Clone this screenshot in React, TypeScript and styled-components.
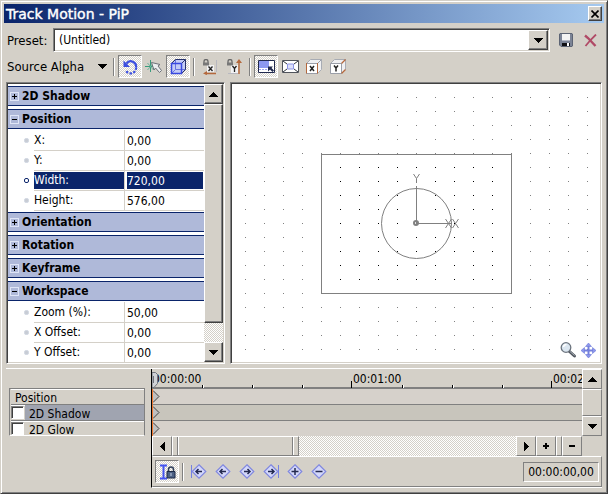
import React, { useState } from "react";
import styled, { createGlobalStyle, css } from "styled-components";

const face = "#d4d0c8";
const shade = "#808080";
const dark = "#404040";
const navy = "#0a246a";
const dither = `conic-gradient(#fff 25%, ${face} 0 50%, #fff 0 75%, ${face} 0) 0 0 / 2px 2px`;

const GlobalStyle = createGlobalStyle`
  *, *::before, *::after { box-sizing: border-box; }
  body { margin: 0; background: ${face}; }
  body, button, input, select {
    font-family: "DejaVu Sans Condensed", "DejaVu Sans", Tahoma, sans-serif;
    font-size: 12px;
    color: #000;
  }
  button, input, select { margin: 0; padding: 0; border: 0; border-radius: 0; background: none; outline: none; }
  svg { display: block; }
`;

const raised = css`
  border: 1px solid;
  border-color: #fff ${dark} ${dark} #fff;
  box-shadow: inset -1px -1px 0 ${shade};
`;

const flatRaised = css`
  border: 1px solid;
  border-color: #fff ${shade} ${shade} #fff;
`;

const sunken = css`
  border: 1px solid;
  border-color: ${shade} #fff #fff ${shade};
  box-shadow: inset 1px 1px 0 ${dark}, inset -1px -1px 0 ${face};
  padding: 1px;
`;

const Dialog = styled.main`
  display: flex;
  flex-direction: column;
  height: 100vh;
  min-height: 400px;
  padding: 2px;
  background: ${face};
  border: 1px solid;
  border-color: ${face} ${dark} ${dark} ${face};
  box-shadow: inset 1px 1px 0 #fff, inset -1px -1px 0 ${shade};
`;

const TitleBar = styled.header`
  display: flex;
  align-items: center;
  justify-content: space-between;
  flex: none;
  height: 19px;
  margin: 1px 1px 0;
  padding: 0 2px;
  background: linear-gradient(90deg, ${navy}, #a6caf0);
`;

const Title = styled.h1`
  margin: 0;
  font-family: "DejaVu Sans", Verdana, sans-serif;
  font-size: 14px;
  line-height: 18px;
  font-weight: 400;
  -webkit-text-stroke: 0.4px #fff;
  color: #fff;
`;

const CloseButton = styled.button`
  ${raised}
  display: grid;
  place-items: center;
  width: 14px;
  height: 15px;
  background: ${face};
`;

const PresetRow = styled.div`
  display: flex;
  align-items: center;
  flex: none;
  margin-top: 5px;
  padding: 0 3px 0 4px;
`;

const PresetLabel = styled.label`
  width: 46px;
  flex: none;
  font-size: 13px;
`;

const Combo = styled.div`
  ${sunken}
  display: grid;
  grid-template-columns: 1fr 20px;
  flex: 1;
  height: 24px;
  margin-right: 4px;
  background: #fff;
`;

const ComboSelect = styled.select`
  appearance: none;
  grid-area: 1 / 1 / 2 / 3;
  padding-left: 4px;
  font-size: 12px;
`;

const ComboArrow = styled.span`
  ${raised}
  grid-area: 1 / 2;
  display: grid;
  place-items: center;
  background: ${face};
  pointer-events: none;
`;

const Toolbar = styled.div`
  display: flex;
  align-items: center;
  flex: none;
  height: 29px;
  padding-left: 4px;
`;

const AlphaButton = styled.button`
  display: flex;
  align-items: center;
  justify-content: space-between;
  width: 100px;
  margin-right: 3px;
  font-size: 13px;
`;

const Separator = styled.span`
  width: 2px;
  height: 18px;
  margin: 0 3px;
  background: linear-gradient(90deg, ${shade} 50%, #fff 0);
`;

const ToolButton = styled.button<{ $on?: boolean }>`
  display: grid;
  place-items: center;
  flex: none;
  width: 24px;
  height: 23px;
  border: 1px solid transparent;
  ${(p) => p.$on && css`
    background: ${dither};
    border-color: ${shade} #fff #fff ${shade};
  `}
`;

const Workspace = styled.div`
  display: flex;
  flex: 1;
  min-height: 0;
  gap: 5px;
  padding: 1px 3px 0;
`;

const PropertyPanel = styled.section`
  ${sunken}
  display: flex;
  flex: none;
  width: 219px;
  background: #fff;
`;

const PropertyList = styled.div`
  flex: 1;
  min-width: 0;
  overflow: hidden;
  padding-top: 2px;
`;

const GroupHeader = styled.button`
  display: flex;
  align-items: center;
  gap: 3px;
  width: 100%;
  height: 20px;
  padding-left: 2px;
  background: #afb9d9;
  border-top: 1px solid ${navy};
  border-bottom: 1px solid ${navy};
  font-weight: 700;
`;

const GroupBody = styled.div`
  padding-top: 1px;
`;

const Group = styled.section<{ $open: boolean }>`
  padding-bottom: ${(p) => (p.$open ? 2 : 3)}px;
`;

const PropertyRow = styled.div`
  display: grid;
  grid-template-columns: 26px 90px 1fr;
  height: 20px;
`;

const Bullet = styled.span<{ $on?: boolean }>`
  align-self: center;
  justify-self: end;
  width: 5px;
  height: 5px;
  margin-right: 5px;
  border-radius: 2px;
  background: ${(p) => (p.$on ? "#fff" : "#c8ccd4")};
  border: 1px solid ${(p) => (p.$on ? navy : "#d4dae4")};
`;

const PropertyName = styled.label<{ $on?: boolean }>`
  padding: 2px 0 1px;
  border-bottom: 1px solid ${face};
  line-height: 17px;
  background: ${(p) => (p.$on ? navy : "transparent")};
  background-clip: content-box;
  color: ${(p) => (p.$on ? "#fff" : "#000")};
`;

const PropertyCell = styled.div<{ $on?: boolean }>`
  display: flex;
  padding: 2px 1px 1px 2px;
  border-left: 1px solid ${face};
  border-bottom: 1px solid ${face};
  background: ${(p) => (p.$on ? navy : "transparent")};
  background-clip: content-box;
`;

const PropertyValue = styled.input<{ $on?: boolean }>`
  width: 100%;
  color: ${(p) => (p.$on ? "#fff" : "#000")};
`;

const ScrollColumn = styled.div`
  display: flex;
  flex-direction: column;
  width: 19px;
  flex: none;
  background: ${dither};
`;

const ScrollButton = styled.button`
  ${raised}
  display: grid;
  place-items: center;
  flex: none;
  height: 20px;
  background: ${face};
`;

const ScrollThumb = styled.div`
  ${raised}
  flex: 1;
  margin: 0 0 19px;
  background: ${face};
`;

const Viewport = styled.section`
  ${sunken}
  display: grid;
  flex: 1;
  min-width: 0;
  background: #fff;
`;

const Scene = styled.svg`
  grid-area: 1 / 1;
  width: 100%;
  height: 100%;
  min-height: 0;
`;

const ViewTools = styled.div`
  grid-area: 1 / 1;
  place-self: end;
  display: flex;
  gap: 2px;
  padding: 0 3px 3px 0;
`;

const IconButton = styled.button`
  display: grid;
  place-items: center;
  width: 24px;
  height: 20px;
`;

const ViewButton = styled.button`
  width: 18px;
  height: 18px;
`;

const Timeline = styled.section`
  display: grid;
  grid-template-columns: 145px 1fr;
  flex: none;
  margin: 4px 3px 3px;
  border-top: 1px solid #fff;
`;

const KeyPane = styled.div`
  padding-top: 19px;
`;

const KeyList = styled.ul`
  height: 48px;
  margin: 0 6px 0 3px;
  padding: 0 0 0 1px;
  list-style: none;
  border: 1px solid;
  border-color: ${shade} ${shade} #fff ${shade};
`;

const KeyItem = styled.li<{ $on?: boolean; $plain?: boolean }>`
  display: flex;
  height: 16px;
  padding-left: ${(p) => (p.$plain ? 4 : 0)}px;
  border-bottom: 1px solid ${shade};
  box-shadow: inset 0 1px 0 #fff;
  overflow: hidden;
  line-height: 18px;

  &:last-child { border-bottom: 0; height: 14px; }

  label {
    flex: 1;
    padding-left: 4px;
    background: ${(p) => (p.$on ? "#a0a4b0" : "transparent")};
  }
`;

const Check = styled.input`
  appearance: none;
  width: 13px;
  height: 13px;
  margin: 1px 1px 0 0;
  background: #fff;
  border: 1px solid;
  border-color: ${shade} #fff #fff ${shade};
  box-shadow: inset 1px 1px 0 ${dark};

  &:checked { background: radial-gradient(#000 40%, #fff 45%); }
`;

const TrackPane = styled.div`
  min-width: 0;
  border-left: 1px solid #000;
  border-bottom: 1px solid #fff;
`;

const TrackArea = styled.div`
  display: grid;
  grid-template-columns: 1fr 20px;
`;

const Tracks = styled.div`
  position: relative;
  min-width: 0;
  overflow: hidden;
`;

const Ruler = styled.div`
  display: grid;
  grid-template-columns: repeat(3, 200px);
  height: 20px;
  overflow: hidden;
  background: linear-gradient(${shade}, ${shade}) 0 100% / 100% 2px no-repeat;
`;

const RulerMark = styled.time`
  padding-left: 1px;
  line-height: 20px;
  background:
    linear-gradient(#000, #000) 100% 12px / 1px 7px no-repeat,
    repeating-linear-gradient(90deg, #000 0 1px, #fff 1px 2px, transparent 2px 50px) 50px 16px / 150px 3px no-repeat;
`;

const TrackLane = styled.div<{ $on?: boolean }>`
  height: 16px;
  background: ${(p) => (p.$on ? "#c8c5bc" : "#d6d1cb")};
  border-left: 1px solid #f07830;
  border-bottom: 1px solid ${shade};

  &:last-of-type { border-bottom: 0; height: 15px; }
`;

const Playhead = styled.svg`
  position: absolute;
  left: 0;
  top: 3px;
`;

const LaneScroll = styled.div`
  display: flex;
  flex-direction: column;
`;

const FlatButton = styled.button<{ $w?: number }>`
  ${flatRaised}
  display: grid;
  place-items: center;
  flex: none;
  width: ${(p) => p.$w ?? 20}px;
  height: 20px;
  background: ${face};
`;

const LaneThumb = styled.div`
  ${flatRaised}
  flex: 1;
`;

const TimeScroll = styled.div`
  display: flex;
  margin-right: 20px;
  height: 20px;
  background: ${dither};
`;

const TimeThumb = styled.div`
  ${flatRaised}
  display: flex;
  justify-content: space-between;
  width: 127px;
  padding: 0 4px;
  background: ${face};

  &::before, &::after {
    content: "";
    width: 2px;
    background: linear-gradient(90deg, ${shade} 50%, #fff 0);
  }
`;

const Spacer = styled.span`
  flex: 1;
`;

const KeyToolbar = styled.div`
  display: flex;
  align-items: center;
  height: 31px;
  padding: 0 2px;
  border: 1px solid;
  border-color: #fff ${shade} ${shade} ${face};
`;

const Timecode = styled.input`
  width: 76px;
  height: 20px;
  text-align: center;
  border: 1px solid;
  border-color: ${shade} #fff #fff ${shade};
`;

const Arrow = ({ dir }: { dir: "up" | "down" | "left" | "right" }) => {
  const d = {
    up: "M4 0h1v1h1v1h1v1h1v1h1v1H0V4h1V3h1V2h1V1h1z",
    down: "M0 0h9v1H8v1H7v1H6v1H5v1H4V4H3V3H2V2H1V1H0z",
    left: "M5 0v9H4V8H3V7H2V6H1V5H0V4h1V3h1V2h1V1h1V0z",
    right: "M0 0h1v1h1v1h1v1h1v1h1v1H4v1H3v1H2v1H1v1H0z",
  }[dir];
  const tall = dir === "left" || dir === "right";
  return (
    <svg width={tall ? 5 : 9} height={tall ? 9 : 5} aria-hidden="true">
      <path d={d} shapeRendering="crispEdges" />
    </svg>
  );
};

const CloseIcon = () => (
  <svg width="8" height="8" viewBox="0 0 8 8">
    <path d="M0.5 0.5l7 7M7.5 0.5l-7 7" stroke="#000" strokeWidth="1.6" />
  </svg>
);

const SaveIcon = () => (
  <svg width="14" height="14" viewBox="0 0 14 14">
    <path d="M1 0.5h12l.5.5v12l-.5.5H2L.5 12V1z" fill="#7c8496" stroke="#5d6474" />
    <path d="M3 1h8v6H3z" fill="#f4f4f4" />
    <path d="M3 7h8v1H3z" fill="#b4b8c4" />
    <path d="M3 10h8v3H3z" fill="#101014" />
    <path d="M8 10h2v3H8z" fill="#fff" />
  </svg>
);

const DeleteIcon = () => (
  <svg width="13" height="13" viewBox="0 0 13 13" fill="none" stroke="#b04a66">
    <path d="M1 1.5l3 2.5 7.5 8" strokeWidth="2.4" />
    <path d="M12 0.5L7 5.5 1.5 12" strokeWidth="1.8" />
  </svg>
);

const RotateIcon = () => (
  <svg width="16" height="16" viewBox="0 0 16 16" fill="none" stroke="#3c4fe0">
    <path d="M4.5 4.5A5.3 5.3 0 0 1 14 8.5" strokeWidth="2.2" />
    <path d="M14 8.5A5.3 5.3 0 0 1 4 11.5" strokeWidth="2.2" strokeDasharray="2.4 1.4" />
    <path d="M1.5 1.5v6.500h6.500z" fill="#3c4fe0" stroke="none" />
  </svg>
);

const SnapIcon = () => (
  <svg width="18" height="14" viewBox="0 0 18 14" fill="none">
    <path d="M5.500 0v12M0 6.500h8" stroke="#3a9c7c" />
    <path d="M2.500 3l6 7M8.500 3l-6 7" stroke="#6cb49c" />
    <path d="M6.500 2.500l8.500 2-2 1.500 3.500 4.500-2 2-4-4.500-1.500 2z" fill="#eceef0" stroke="#6c7078" />
  </svg>
);

const CubeIcon = () => (
  <svg width="17" height="17" viewBox="0 0 17 17" fill="none">
    <path d="M1.500 5.500l4-4h10v10l-4 4h-10z" fill="#c4ccf6" />
    <path d="M5.500 1.500v10h10M5.500 11.500l-4 4" stroke="#6874e0" />
    <path d="M5.500 1.500h10v10M1.500 5.500l4-4M11.500 5.500l4-4M11.500 15.500l4-4" stroke="#24306c" />
    <path d="M1.500 5.500h10v10h-10z" stroke="#3848e0" strokeWidth="1.500" />
  </svg>
);

const Lock = () => (
  <>
    <path d="M2 4V2.500a2 2 0 0 1 4 0V4" stroke="#686868" fill="none" strokeWidth="1.300" />
    <path d="M1 3.500h6v3H1z" fill="#787878" />
  </>
);

const glyphX = "M6.500 7.500l4 4.500M10.500 7.500l-4 4.500";
const glyphY = "M6.500 7l2 2.500L10.500 7M8.500 9.500v3.500";

const LockXIcon = () => (
  <svg width="16" height="16" viewBox="0 0 16 16" fill="none">
    <path d="M14.500 1v12" stroke="#b8b8c0" />
    <path d="M5 6h7v7H5z" fill="#f2f2f4" />
    <Lock />
    <path d={glyphX} stroke="#222" strokeWidth="1.300" />
    <path d="M14 14.500H3" stroke="#b4683c" strokeWidth="1.500" />
    <path d="M5 12v4l-4-1.500z" fill="#b4683c" />
  </svg>
);

const LockYIcon = () => (
  <svg width="16" height="16" viewBox="0 0 16 16" fill="none">
    <path d="M2 14.500h10" stroke="#b8b8c0" />
    <path d="M5 6h7v8H5z" fill="#f2f2f4" />
    <Lock />
    <path d={glyphY} stroke="#222" strokeWidth="1.300" />
    <path d="M13 15V2" stroke="#b4683c" strokeWidth="1.500" />
    <path d="M10 4h6l-3-4z" fill="#b4683c" />
  </svg>
);

const ResizeIcon = () => (
  <svg width="17" height="13" viewBox="0 0 17 13" fill="none">
    <path d="M.5.5h16v12H.5z" fill="#fff" stroke="#20284c" />
    <path d="M1 1h10v7H1z" fill="#8c98f0" />
    <path d="M1 9.500h10.500V8" stroke="#9ca4f0" strokeDasharray="2 1" />
    <path d="M10 6.500h5l-1.500 1.500 2.500 2.500-1.500 1.500-2.500-2.500-2 2z" fill="#20284c" />
  </svg>
);

const PerspectiveIcon = () => (
  <svg width="17" height="13" viewBox="0 0 17 13" fill="none">
    <path d="M.5.5h16v12H.5z" fill="#fff" stroke="#50545c" />
    <path d="M1 1l4 3M16 1l-4 3M1 12l4-3M16 12l-4-3" stroke="#30343c" />
    <path d="M5.500 4h6v5h-6z" fill="#dcdffa" stroke="#8c94e4" />
  </svg>
);

const FaceCube = ({ axis }: { axis: "X" | "Y" }) => (
  <svg width="16" height="15" viewBox="0 0 16 15" fill="none">
    <path d="M.5 4.500l4-4h11v10l-4 4H.5z" fill="#f0f0f2" stroke="#a8acb4" />
    <path d="M.5 4.500h11v10H.5zM11.500 4.500l4-4" fill="#fff" stroke="#9a9ea8" />
    {axis === "X" ? (
      <path d="M.5 4v10.500M11.500 4v10.500" stroke="#b4683c" />
    ) : (
      <path d="M11.500 4.500l4-4M11.500 14.500l4-4" stroke="#b4683c" strokeWidth="1.300" />
    )}
    <path
      d={axis === "X" ? "M4 7l4 5M8 7l-4 5" : "M4 6.500L6 9l2-2.500M6 9v3.500"}
      stroke="#222"
      strokeWidth="1.500"
    />
  </svg>
);

const ExpandIcon = ({ open }: { open: boolean }) => (
  <svg width="9" height="9" viewBox="0 0 9 9" shapeRendering="crispEdges" fill="none">
    <path d="M.5.5h8v8h-8z" stroke="#dfe5f6" />
    <path d={open ? "M2 4.500h5" : "M2 4.500h5M4.500 2v5"} stroke="#000" />
  </svg>
);

const ZoomIcon = () => (
  <svg width="18" height="18" viewBox="0 0 18 18" fill="none">
    <path d="M10.500 10.500l5 4.500" stroke="#50565e" strokeWidth="3" strokeLinecap="round" />
    <path d="M11 10.500l4.500 4" stroke="#a8b0b8" />
    <circle cx="7" cy="6.500" r="4.800" fill="#dbe6f0" stroke="#6c747e" strokeWidth="1.300" />
    <path d="M4.500 6a3 3 0 0 1 3-2.500" stroke="#fff" strokeWidth="1.500" />
  </svg>
);

const PanIcon = () => (
  <svg width="18" height="18" viewBox="0 0 18 18" fill="none">
    <path d="M9.500 4v12M3.500 9.500h12" stroke="#7480dc" strokeWidth="2" />
    <path d="M9.500 2l3 3.500h-6zM9.500 17l3-3.500h-6zM2 9.500l3.500-3v6zM17 9.500l-3.500-3v6z" fill="#8c96ec" stroke="#6c78d8" strokeWidth=".6" />
  </svg>
);

const CursorLockIcon = () => (
  <svg width="17" height="16" viewBox="0 0 17 16" fill="none">
    <path d="M1 1.500h7M1 14.500h7M4.500 1.500v13" stroke="#4454f0" strokeWidth="2" />
    <path d="M9.500 8V5.500a2.500 2.500 0 0 1 5 0V8" stroke="#30405c" strokeWidth="1.500" />
    <path d="M8 7.500h8V14H8z" fill="#4c6084" stroke="#1c2844" />
    <path d="M12 9v3" stroke="#c4d0e4" />
  </svg>
);

type KeyKind = "first" | "prev" | "next" | "last" | "add" | "remove";

const glyphs: Record<KeyKind, string> = {
  first: "M5 7.500h6M7.500 5L5 7.500 7.500 10",
  prev: "M5 7.500h6M7.500 5L5 7.500 7.500 10",
  next: "M5 7.500h6M8.500 5L11 7.500 8.500 10",
  last: "M5 7.500h6M8.500 5L11 7.500 8.500 10",
  add: "M4.500 7.500h7M8 4v7",
  remove: "M4.500 7.500h7",
};

const KeyIcon = ({ kind }: { kind: KeyKind }) => (
  <svg width="16" height="15" viewBox="0 0 16 15" fill="none">
    <path d="M8 .8l6.800 6.700L8 14.200 1.200 7.500z" fill="#d4d8fa" stroke="#8088e0" strokeWidth="1.200" />
    {kind === "first" && <path d="M.5 1v13" stroke="#7480e4" />}
    {kind === "last" && <path d="M15.500 1v13" stroke="#7480e4" />}
    <path d={glyphs[kind]} stroke="#242a50" strokeWidth="1.500" />
  </svg>
);

const PlusMinus = ({ plus }: { plus?: boolean }) => (
  <svg width="6" height="6" shapeRendering="crispEdges">
    <path d={plus ? "M0 2h6v2H0zM2 0h2v6H2z" : "M0 2h6v2H0z"} />
  </svg>
);

const range = (from: number, to: number) =>
  Array.from({ length: to - from + 1 }, (_, i) => from + i);

const MotionScene = () => (
  <Scene viewBox="0 0 368 278" preserveAspectRatio="xMidYMid slice" role="img" aria-label="Track position">
    <g shapeRendering="crispEdges">
      {range(-9, 9).flatMap((col) =>
        range(-9, 9).map((row) => {
          const inside = Math.abs(col) < 5 && Math.abs(row) < 5;
          return (
            <rect
              key={`${col}:${row}`}
              x={184 + col * 19}
              y={139 + row * 14}
              width="1"
              height="1"
              fill={inside ? "#000" : "#808080"}
            />
          );
        })
      )}
      <rect x="89.500" y="70.500" width="190" height="139" fill="none" stroke="#808080" />
      <path d="M184.500 102v38M184 139.500h36" stroke="#808080" />
    </g>
    <g fill="none" stroke="#808080">
      <circle cx="184.500" cy="139.500" r="35" />
      <circle cx="184" cy="139" r="2" strokeWidth="2" />
      <path d="M181.500 90l3 4.500 3-4.500M184.500 94.500v4.500M213.500 135l6 9M219.500 135l-6 9M220.500 135l6 9M226.500 135l-6 9" />
    </g>
  </Scene>
);

const groups = [
  { name: "2D Shadow", rows: [] },
  { name: "Position", rows: [["X:", "0,00"], ["Y:", "0,00"], ["Width:", "720,00"], ["Height:", "576,00"]] },
  { name: "Orientation", rows: [] },
  { name: "Rotation", rows: [] },
  { name: "Keyframe", rows: [] },
  { name: "Workspace", rows: [["Zoom (%):", "50,00"], ["X Offset:", "0,00"], ["Y Offset:", "0,00"]] },
];

const keyButtons: [KeyKind, string][] = [
  ["first", "First keyframe"],
  ["prev", "Previous keyframe"],
  ["next", "Next keyframe"],
  ["last", "Last keyframe"],
  ["add", "Create keyframe"],
  ["remove", "Delete keyframe"],
];

export default function App() {
  const [open, setOpen] = useState<string[]>(["Position", "Workspace"]);
  const [selected, setSelected] = useState("Width:");
  const [sync, setSync] = useState(true);
  const toggle = (name: string) =>
    setOpen((list) => (list.includes(name) ? list.filter((n) => n !== name) : [...list, name]));

  return (
    <>
      <GlobalStyle />
      <Dialog>
        <TitleBar>
          <Title>Track Motion - PiP</Title>
          <CloseButton aria-label="Close"><CloseIcon /></CloseButton>
        </TitleBar>

        <PresetRow>
          <PresetLabel htmlFor="preset">Preset:</PresetLabel>
          <Combo>
            <ComboSelect id="preset"><option>(Untitled)</option></ComboSelect>
            <ComboArrow><Arrow dir="down" /></ComboArrow>
          </Combo>
          <IconButton aria-label="Save preset"><SaveIcon /></IconButton>
          <IconButton aria-label="Delete preset"><DeleteIcon /></IconButton>
        </PresetRow>

        <Toolbar>
          <AlphaButton><span>Source Al<u>p</u>ha</span><Arrow dir="down" /></AlphaButton>
          <Separator />
          <ToolButton $on aria-label="Enable rotation"><RotateIcon /></ToolButton>
          <ToolButton aria-label="Enable snapping"><SnapIcon /></ToolButton>
          <ToolButton $on aria-label="Edit in object space"><CubeIcon /></ToolButton>
          <Separator />
          <ToolButton aria-label="Prevent movement X"><LockXIcon /></ToolButton>
          <ToolButton aria-label="Prevent movement Y"><LockYIcon /></ToolButton>
          <Separator />
          <ToolButton $on aria-label="Lock aspect ratio"><ResizeIcon /></ToolButton>
          <ToolButton aria-label="Scale about center"><PerspectiveIcon /></ToolButton>
          <ToolButton aria-label="Prevent scaling X"><FaceCube axis="X" /></ToolButton>
          <ToolButton aria-label="Prevent scaling Y"><FaceCube axis="Y" /></ToolButton>
        </Toolbar>

        <Workspace>
          <PropertyPanel>
            <PropertyList>
              {groups.map((group) => {
                const isOpen = open.includes(group.name);
                const hasBody = isOpen && group.rows.length > 0;
                return (
                  <Group key={group.name} $open={hasBody}>
                    <GroupHeader aria-expanded={isOpen} onClick={() => toggle(group.name)}>
                      <ExpandIcon open={isOpen} />
                      {group.name}
                    </GroupHeader>
                    {hasBody && (
                      <GroupBody>
                        {group.rows.map(([name, value]) => {
                          const on = selected === name;
                          const id = `${group.name}-${name}`;
                          return (
                            <PropertyRow key={name}>
                              <Bullet $on={on} />
                              <PropertyName htmlFor={id} $on={on}>{name}</PropertyName>
                              <PropertyCell $on={on}>
                                <PropertyValue id={id} $on={on} defaultValue={value} onFocus={() => setSelected(name)} />
                              </PropertyCell>
                            </PropertyRow>
                          );
                        })}
                      </GroupBody>
                    )}
                  </Group>
                );
              })}
            </PropertyList>
            <ScrollColumn>
              <ScrollButton aria-label="Scroll up"><Arrow dir="up" /></ScrollButton>
              <ScrollThumb />
              <ScrollButton aria-label="Scroll down"><Arrow dir="down" /></ScrollButton>
            </ScrollColumn>
          </PropertyPanel>

          <Viewport>
            <MotionScene />
            <ViewTools>
              <ViewButton aria-label="Zoom"><ZoomIcon /></ViewButton>
              <ViewButton aria-label="Pan"><PanIcon /></ViewButton>
            </ViewTools>
          </Viewport>
        </Workspace>

        <Timeline>
          <KeyPane>
            <KeyList>
              <KeyItem $plain>Position</KeyItem>
              <KeyItem $on>
                <Check type="checkbox" id="key-shadow" />
                <label htmlFor="key-shadow">2D Shadow</label>
              </KeyItem>
              <KeyItem>
                <Check type="checkbox" id="key-glow" />
                <label htmlFor="key-glow">2D Glow</label>
              </KeyItem>
            </KeyList>
          </KeyPane>

          <TrackPane>
            <TrackArea>
              <Tracks>
                <Ruler>
                  <RulerMark>00:00:00</RulerMark>
                  <RulerMark>00:01:00</RulerMark>
                  <RulerMark>00:02:00</RulerMark>
                </Ruler>
                {[0, 1, 2].map((lane) => (
                  <TrackLane key={lane} $on={lane === 1}>
                    <svg width="8" height="15" viewBox="0 0 8 15">
                      <path d="M0 1.500l6 6-6 6" fill="#c0c0c0" stroke="#404040" />
                    </svg>
                  </TrackLane>
                ))}
                <Playhead width="6" height="16" viewBox="0 0 6 16">
                  <path d="M0 .5h3.500l2 2v9L2 15.500H0z" fill="#d0d2d6" stroke="#70747c" />
                  <path d="M1.500 4v7" stroke="#70747c" />
                </Playhead>
              </Tracks>
              <LaneScroll>
                <FlatButton aria-label="Scroll tracks up"><Arrow dir="up" /></FlatButton>
                <LaneThumb />
                <FlatButton aria-label="Scroll tracks down"><Arrow dir="down" /></FlatButton>
              </LaneScroll>
            </TrackArea>
            <TimeScroll>
              <FlatButton aria-label="Scroll left"><Arrow dir="left" /></FlatButton>
              <TimeThumb />
              <Spacer />
              <FlatButton aria-label="Scroll right"><Arrow dir="right" /></FlatButton>
              <FlatButton aria-label="Zoom in"><PlusMinus plus /></FlatButton>
              <FlatButton $w={6} aria-label="Zoom grip" />
              <FlatButton aria-label="Zoom out"><PlusMinus /></FlatButton>
            </TimeScroll>
            <KeyToolbar>
              <ToolButton $on={sync} aria-pressed={sync} aria-label="Sync cursor" onClick={() => setSync(!sync)}>
                <CursorLockIcon />
              </ToolButton>
              <Separator />
              {keyButtons.map(([kind, label]) => (
                <ToolButton key={kind} aria-label={label}><KeyIcon kind={kind} /></ToolButton>
              ))}
              <Spacer />
              <Timecode aria-label="Cursor position" defaultValue="00:00:00,00" />
            </KeyToolbar>
          </TrackPane>
        </Timeline>
      </Dialog>
    </>
  );
}
